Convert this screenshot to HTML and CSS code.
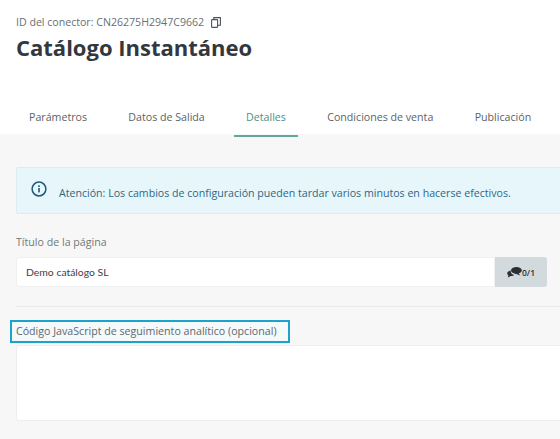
FILE: index.html
```html
<!DOCTYPE html>
<html>
<head>
	<title>Catálogo Instantáneo</title>
	<link rel="stylesheet" href="styles.css">
</head>
<body>
	<header class="page-header">
		<div class="connector-id">
			<span>ID del conector: CN26275H2947C9662</span>
			<svg class="copy-icon" width="10" height="11" viewBox="0 0 10 11" fill="none" stroke="#4a5358" stroke-width="1.1">
				<rect x="0.6" y="2.6" width="6" height="7.8" rx="0.6"/>
				<path d="M2.8 2.4V0.6H9.4V8.2H6.8"/>
			</svg>
		</div>
		<h1 class="page-title">Catálogo Instantáneo</h1>
		<nav class="tabs">
			<a class="tab">Parámetros</a>
			<a class="tab">Datos de Salida</a>
			<a class="tab active">Detalles</a>
			<a class="tab">Condiciones de venta</a>
			<a class="tab">Publicación</a>
		</nav>
	</header>

	<main class="content">
		<div class="alert">
			<svg class="info-icon" width="16" height="16" viewBox="0 0 16 16" fill="none">
				<circle cx="8" cy="8" r="6.9" stroke="#1d5a7a" stroke-width="1.5"/>
				<rect x="7.2" y="7" width="1.6" height="4.4" fill="#1d5a7a"/>
				<rect x="7.2" y="4.3" width="1.6" height="1.7" fill="#1d5a7a"/>
			</svg>
			<span class="alert-text">Atención: Los cambios de configuración pueden tardar varios minutos en hacerse efectivos.</span>
		</div>

		<label class="field-label">Título de la página</label>
		<div class="input-group">
			<div class="input">Demo catálogo SL</div>
			<div class="addon">
				<svg width="15" height="11" viewBox="0 0 15 11" fill="#2b3033">
					<ellipse cx="9.4" cy="3.4" rx="5.4" ry="3.3"/>
					<path d="M11 5.5L13.4 8.4L7.6 6.4Z"/>
					<path d="M3.6 3.6C1.6 3.9 0.2 5 0.2 6.4C0.2 7.2 0.7 7.9 1.4 8.4L0.8 10.6L3.8 9.1C5 9.2 6.4 8.8 7.2 8L5.2 7.2C4.2 6.4 3.6 5 3.6 3.6Z"/>
				</svg>
				<span>0/1</span>
			</div>
		</div>

		<hr class="divider">

		<div class="highlight">Código JavaScript de seguimiento analítico (opcional)</div>
		<div class="textarea"></div>
	</main>
</body>
</html>
```

FILE: styles.css
```css
html, body {
	margin: 0;
	height: 100%;
	overflow: hidden;
}

body {
	width: 560px;
	height: 439px;
	display: flex;
	flex-direction: column;
	font-family: "Open Sans", "Liberation Sans", sans-serif;
	background-color: #f7f7f7;
}

.page-header {
	background-color: #fff;
	padding: 14px 0 0 16px;
	height: 120px;
	flex-shrink: 0;
}

.connector-id {
	display: flex;
	align-items: center;
	gap: 7px;
	height: 16px;
	font-size: 10.6px;
	color: #667075;
}

.page-title {
	margin: 2px 0 0;
	font-size: 22px;
	line-height: 30px;
	font-weight: 700;
	color: #32383d;
}

.tabs {
	display: flex;
	gap: 17.3px;
	margin-top: 41px;
	margin-left: 1px;
}

.tab {
	padding: 7px 12px 0;
	height: 25px;
	font-size: 10.65px;
	line-height: 14px;
	color: #5a6368;
}

.tab.active {
	color: #4d8f85;
	border-bottom: 2px solid #5fa89b;
}

.content {
	flex: 1;
	padding: 33px 0 0 16px;
}

.alert {
	display: flex;
	align-items: center;
	width: 560px;
	height: 47px;
	box-sizing: border-box;
	padding: 4px 0 0 14px;
	background-color: #e6f6fb;
	border: 1px solid #dcedf2;
	border-radius: 2px;
}

.info-icon {
	margin-top: -7px;
	flex-shrink: 0;
}

.alert-text {
	margin-left: 12px;
	font-size: 10.62px;
	color: #2f6785;
}

.field-label {
	display: block;
	margin-top: 21px;
	font-size: 10.65px;
	line-height: 14px;
	color: #6f777c;
}

.input-group {
	display: flex;
	width: 531px;
	height: 30px;
	margin-top: 8px;
}

.input {
	flex: 1;
	box-sizing: border-box;
	padding-left: 9px;
	font-family: "Lato", "Open Sans", sans-serif;
	font-size: 10.4px;
	line-height: 28px;
	color: #3c4245;
	background-color: #fff;
	border: 1px solid #f0f0f0;
	border-radius: 3px 0 0 3px;
}

.addon {
	display: flex;
	align-items: center;
	justify-content: center;
	width: 52px;
	font-size: 8.5px;
	font-weight: 600;
	color: #2b3033;
	background-color: #d3dadd;
	border-radius: 0 3px 3px 0;
}

.divider {
	width: 544px;
	margin: 19px 0 0;
	border: none;
	border-top: 1px solid #ebebeb;
}

.highlight {
	box-sizing: border-box;
	width: 280px;
	height: 23px;
	margin: 13px 0 0 -6px;
	padding-left: 4px;
	font-size: 10.65px;
	line-height: 18px;
	color: #5f676c;
	background-color: #f4fafc;
	border: 2px solid #1ba3cc;
}

.textarea {
	width: 560px;
	height: 76px;
	margin-top: 2px;
	box-sizing: border-box;
	background-color: #fff;
	border: 1px solid #eeeeee;
	border-radius: 3px;
}
```
